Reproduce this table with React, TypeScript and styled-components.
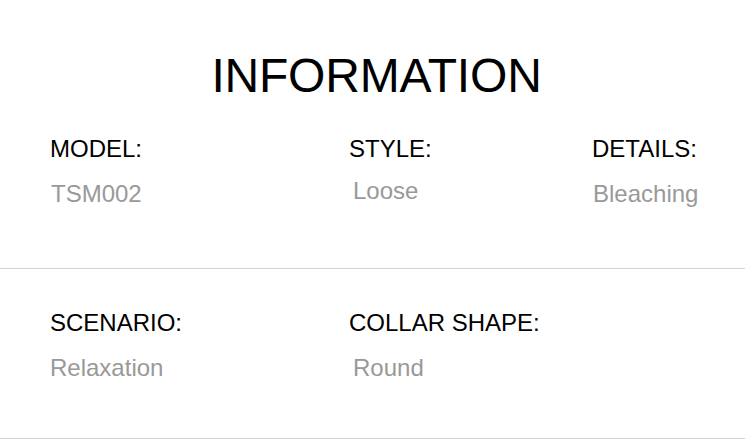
import React from "react";
import styled, { createGlobalStyle } from "styled-components";

const GlobalStyle = createGlobalStyle`
  html, body {
    margin: 0;
    padding: 0;
    background: #ffffff;
  }
  body {
    font-family: "Liberation Sans", Arial, Helvetica, sans-serif;
  }
`;

const Page = styled.div`
  width: 750px;
  height: 447px;
  background: #ffffff;
  overflow: hidden;
  display: flex;
  flex-direction: column;
`;

const Title = styled.h1`
  margin: 52px 0 0 0;
  font-family: "Liberation Sans", Arial, sans-serif;
  font-weight: 400;
  font-size: 48px;
  line-height: 48px;
  color: #000000;
  text-align: center;
  letter-spacing: -0.2px;
  padding-left: 3px;
`;

const Section = styled.section<{ $top: number; $bottom: number }>`
  display: grid;
  grid-template-columns: 299px 243px 1fr;
  padding: ${(p) => p.$top}px 0 ${(p) => p.$bottom}px 50px;
`;

const Field = styled.div`
  display: flex;
  flex-direction: column;
  gap: 21px;
`;

const Label = styled.div`
  font-size: 24px;
  line-height: 24px;
  color: #000000;
  white-space: nowrap;
`;

const Value = styled.div<{ $indent?: number; $shift?: number }>`
  font-size: 24px;
  line-height: 24px;
  color: #999999;
  white-space: nowrap;
  padding-left: ${(p) => p.$indent ?? 0}px;
  margin-top: ${(p) => p.$shift ?? 0}px;
`;

const Divider = styled.hr`
  margin: 0;
  border: none;
  height: 1px;
  width: 745px;
  background: #d2d2d2;
`;

type Item = { label: string; value: string; indent?: number; shift?: number };

const rowOne: Item[] = [
  { label: "MODEL:", value: "TSM002", indent: 1, shift: 0 },
  { label: "STYLE:", value: "Loose", indent: 4, shift: -3 },
  { label: "DETAILS:", value: "Bleaching", indent: 1, shift: 0 },
];

const rowTwo: Item[] = [
  { label: "SCENARIO:", value: "Relaxation", indent: 0, shift: 0 },
  { label: "COLLAR SHAPE:", value: "Round", indent: 4, shift: 0 },
];

const Row: React.FC<{ items: Item[]; top: number; bottom: number }> = ({
  items,
  top,
  bottom,
}) => (
  <Section $top={top} $bottom={bottom}>
    {items.map((it) => (
      <Field key={it.label}>
        <Label>{it.label}</Label>
        <Value $indent={it.indent} $shift={it.shift}>
          {it.value}
        </Value>
      </Field>
    ))}
  </Section>
);

export default function App() {
  return (
    <>
      <GlobalStyle />
      <Page>
        <Title>INFORMATION</Title>
        <Row items={rowOne} top={37} bottom={62} />
        <Divider />
        <Row items={rowTwo} top={42} bottom={58} />
        <Divider />
      </Page>
    </>
  );
}
